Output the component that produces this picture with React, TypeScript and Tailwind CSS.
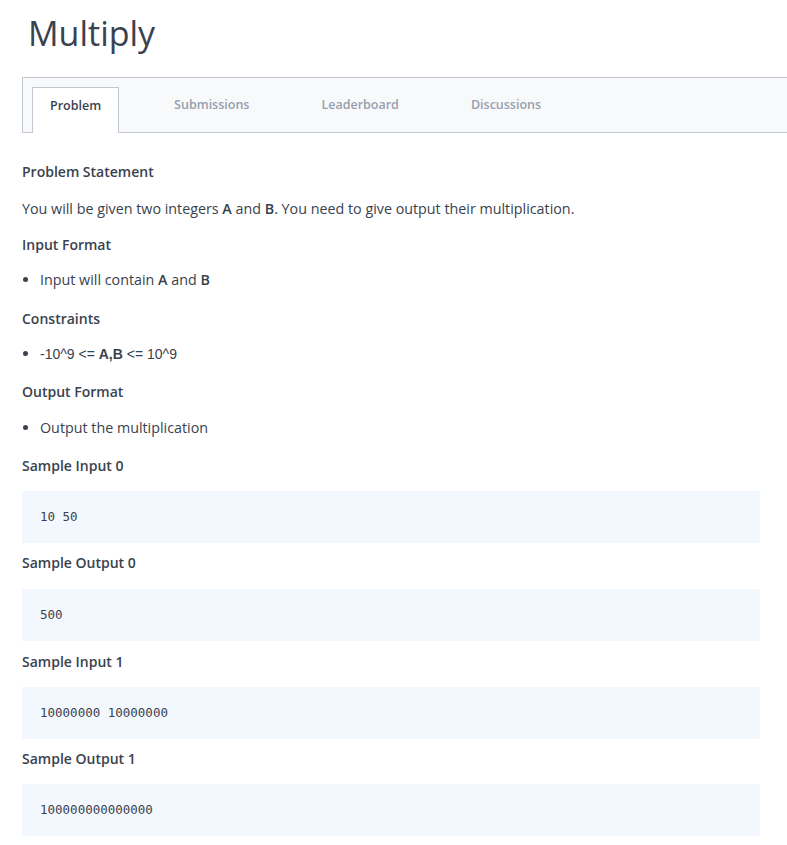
const font = { fontFamily: '"Open Sans", "Liberation Sans", sans-serif' };

function Heading({ children, mb }: { children: React.ReactNode; mb: string }) {
  return <h3 className={`text-[14px] leading-[20px] font-[550] text-[#39424e] ${mb}`}>{children}</h3>;
}

function Bullet({ children, mb }: { children: React.ReactNode; mb: string }) {
  return (
    <ul className={`list-disc pl-[18px] ${mb}`}>
      <li className="text-[14.3px] leading-[20px] text-[#39424e]">{children}</li>
    </ul>
  );
}

function Pre({ children, mb }: { children: React.ReactNode; mb: string }) {
  return (
    <pre
      className={`w-[738px] h-[52px] bg-[#f3f8fe] px-[18px] flex items-center text-[12.5px] text-[#39424e] ${mb}`}
      style={{ fontFamily: '"DejaVu Sans Mono", monospace' }}
    >
      {children}
    </pre>
  );
}

export default function App() {
  const tabs = ["Problem", "Submissions", "Leaderboard", "Discussions"];
  return (
    <div className="min-h-screen bg-white pl-[22px] overflow-hidden" style={font}>
      <h1 className="text-[34px] leading-[48px] pt-[9px] pl-[6px] text-[#39424e] font-normal">Multiply</h1>

      {/* tab bar */}
      <div className="mt-[20px] h-[56px] w-[800px] border border-[#c2c7d0] bg-[#f8f9fa] flex items-end pl-[9px] gap-[38px]">
        {tabs.map((t, i) =>
          i === 0 ? (
            <div
              key={t}
              className="h-[46px] -mb-px px-[17px] pb-[8px] bg-white border border-b-0 border-[#c2c7d0] flex items-center text-[12.5px] font-[550] text-[#39424e]"
            >
              {t}
            </div>
          ) : (
            <div key={t} className="h-[46px] px-[17px] pb-[8px] flex items-center text-[12.5px] font-[550] text-[#979faf]">
              {t}
            </div>
          )
        )}
      </div>

      <div className="pt-[29px]">
        <Heading mb="mb-[17px]">Problem Statement</Heading>
        <p className="text-[14.3px] leading-[20px] text-[#39424e] mb-[16px]">
          You will be given two integers <b className="font-semibold">A</b> and <b className="font-semibold">B</b>. You need
          to give output their multiplication.
        </p>
        <Heading mb="mb-[15px]">Input Format</Heading>
        <Bullet mb="mb-[19px]">
          Input will contain <b className="font-semibold">A</b> and <b className="font-semibold">B</b>
        </Bullet>
        <Heading mb="mb-[15px]">Constraints</Heading>
        <Bullet mb="mb-[18px]">
          <span className="text-[14px]" style={{ fontFamily: '"Liberation Sans", sans-serif' }}>
            -10^9 &lt;= <b className="font-bold">A,B</b> &lt;= 10^9
          </span>
        </Bullet>
        <Heading mb="mb-[16px]">Output Format</Heading>
        <Bullet mb="mb-[18px]">Output the multiplication</Bullet>

        <Heading mb="mb-[15px]">Sample Input 0</Heading>
        <Pre mb="mb-[10px]">10 50</Pre>
        <Heading mb="mb-[16px]">Sample Output 0</Heading>
        <Pre mb="mb-[11px]">500</Pre>
        <Heading mb="mb-[15px]">Sample Input 1</Heading>
        <Pre mb="mb-[10px]">10000000 10000000</Pre>
        <Heading mb="mb-[15px]">Sample Output 1</Heading>
        <Pre mb="mb-[10px]">100000000000000</Pre>
      </div>
    </div>
  );
}
